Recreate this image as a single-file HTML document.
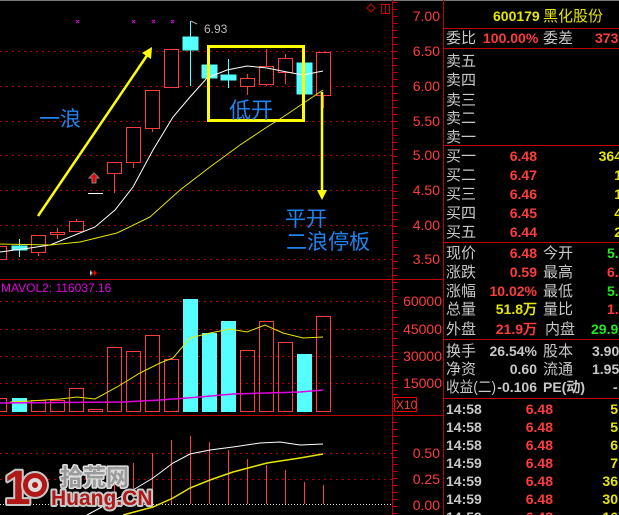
<!DOCTYPE html>
<html><head><meta charset="utf-8"><style>
html,body{margin:0;padding:0;background:#000;width:619px;height:515px;overflow:hidden}
svg{display:block}
text{font-family:"Liberation Sans","WenQuanYi Zen Hei",sans-serif}
.cn{font-family:"WenQuanYi Zen Hei","Noto Sans CJK SC",sans-serif}
.g{fill:#c8c8c8}.r{fill:#ff3c3c}.y{fill:#e6e600}.gr{fill:#22e622}
.b{font-weight:bold}
</style></head><body>
<svg width="619" height="515" viewBox="0 0 619 515" xmlns="http://www.w3.org/2000/svg">
<rect width="619" height="515" fill="#000"/>
<line x1="0" y1="0.5" x2="619" y2="0.5" stroke="#777"/>
<g stroke="#b00000" stroke-dasharray="2 4" stroke-width="1">
<line x1="0" y1="51.5" x2="392" y2="51.5"/><line x1="0" y1="86.5" x2="392" y2="86.5"/>
<line x1="0" y1="121.5" x2="392" y2="121.5"/><line x1="0" y1="155.5" x2="392" y2="155.5"/>
<line x1="0" y1="190.5" x2="392" y2="190.5"/><line x1="0" y1="225.5" x2="392" y2="225.5"/>
<line x1="0" y1="259.5" x2="392" y2="259.5"/>
<line x1="0" y1="301.5" x2="392" y2="301.5"/><line x1="0" y1="329.5" x2="392" y2="329.5"/>
<line x1="0" y1="356.5" x2="392" y2="356.5"/><line x1="0" y1="383.5" x2="392" y2="383.5"/>
<line x1="0" y1="453.5" x2="392" y2="453.5"/><line x1="0" y1="479.5" x2="392" y2="479.5"/>
</g>
<line x1="0" y1="504.5" x2="392" y2="504.5" stroke="#ddd" stroke-dasharray="1 2"/>
<g stroke="#c00000" stroke-width="1">
<line x1="392.5" y1="0" x2="392.5" y2="515"/>
<line x1="443.5" y1="0" x2="443.5" y2="515"/>
<line x1="0" y1="279.5" x2="443" y2="279.5"/>
<line x1="0" y1="415.5" x2="443" y2="415.5"/>
<line x1="443" y1="28.5" x2="619" y2="28.5"/>
<line x1="443" y1="48.5" x2="619" y2="48.5"/>
<line x1="443" y1="145.5" x2="619" y2="145.5"/>
<line x1="443" y1="242.5" x2="619" y2="242.5"/>
<line x1="443" y1="339.5" x2="619" y2="339.5"/>
<line x1="443" y1="398.5" x2="619" y2="398.5"/>
</g>
<line x1="395" y1="2" x2="395" y2="515" stroke="#c00000" stroke-width="5" stroke-dasharray="1 6"/>
<g class="r" font-size="14" text-anchor="end">
<text x="440" y="21">7.00</text><text x="440" y="56">6.50</text><text x="440" y="91">6.00</text>
<text x="440" y="126">5.50</text><text x="440" y="160">5.00</text><text x="440" y="195">4.50</text>
<text x="440" y="230">4.00</text><text x="440" y="264">3.50</text>
<text x="442" y="306">60000</text><text x="442" y="334">45000</text><text x="442" y="361">30000</text><text x="442" y="388">15000</text>
<text x="440" y="458">0.50</text><text x="440" y="484">0.25</text><text x="440" y="510">0.00</text>
</g>
<rect x="394.5" y="397.5" width="22" height="14" fill="#000" stroke="#e00"/>
<text x="396" y="409" font-size="12" class="r">X10</text>
<path d="M371 4 L375 8 L371 12 L367 8Z" fill="none" stroke="#c00"/>
<rect x="381.5" y="4.5" width="8" height="9" fill="none" stroke="#c00"/><line x1="385.5" y1="4" x2="385.5" y2="14" stroke="#c00"/>
<g stroke="#e000e0"><path d="M76 20l3 3M79 20l-3 3M132 20l3 3M135 20l-3 3M152 20l3 3M155 20l-3 3M171 20l3 3M174 20l-3 3"/></g>
<path d="M191 21 L197 24" stroke="#aaa"/><text x="204" y="33" font-size="12" fill="#bbb">6.93</text>
<g stroke="#ff3c3c" fill="none" stroke-width="1">
<rect x="-1.5" y="246.5" width="8" height="13"/>
<line x1="38.5" y1="252" x2="38.5" y2="256"/><rect x="31.5" y="235.5" width="14" height="17" fill="#000"/>
<line x1="57.5" y1="228" x2="57.5" y2="239"/><rect x="50.5" y="232.5" width="14" height="2" fill="#000"/>
<line x1="76.5" y1="219" x2="76.5" y2="231"/><rect x="69.5" y="221.5" width="14" height="10" fill="#000"/>
<line x1="114.5" y1="173" x2="114.5" y2="193"/><rect x="107.5" y="162.5" width="14" height="11" fill="#000"/>
<line x1="133.5" y1="162" x2="133.5" y2="168"/><rect x="126.5" y="127.5" width="14" height="35" fill="#000"/>
<line x1="152.5" y1="128" x2="152.5" y2="132"/><rect x="145.5" y="90.5" width="14" height="38" fill="#000"/>
<rect x="164.5" y="49.5" width="14" height="38" fill="#000"/>
<line x1="247.5" y1="74" x2="247.5" y2="95"/><rect x="240.5" y="78.5" width="14" height="8" fill="#000"/>
<line x1="266.5" y1="49" x2="266.5" y2="86"/><rect x="259.5" y="66.5" width="14" height="18" fill="#000"/>
<line x1="285.5" y1="54" x2="285.5" y2="84"/><rect x="278.5" y="58.5" width="14" height="14" fill="#000"/>
<line x1="323.5" y1="95" x2="323.5" y2="108"/><rect x="316.5" y="52.5" width="14" height="43" fill="#000"/>
</g>
<g stroke="#55ffff" fill="#55ffff">
<line x1="19.5" y1="239" x2="19.5" y2="257"/><rect x="12" y="246" width="15" height="4"/>
<line x1="190.5" y1="21" x2="190.5" y2="86"/><rect x="183" y="37" width="15" height="13"/>
<line x1="209.5" y1="62" x2="209.5" y2="80"/><rect x="202" y="65" width="15" height="13"/>
<line x1="228.5" y1="59" x2="228.5" y2="88"/><rect x="221" y="75" width="15" height="5"/>
<line x1="304.5" y1="54" x2="304.5" y2="100"/><rect x="297" y="63" width="15" height="31"/>
</g>
<line x1="88" y1="193.5" x2="103" y2="193.5" stroke="#fff"/>
<path d="M94 173 L99 178 L96 178 L96 183 L92 183 L92 178 L89 178Z" fill="#e00" stroke="#888"/>
<polyline fill="none" stroke="#fff" stroke-width="1" points="0,252 30,248 50,245 95,227 115,210 133,187 153,150 173,117 190,97 207,78 227,70 247,66 267,68 287,72 303,75 323,71"/>
<polyline fill="none" stroke="#e6e600" stroke-width="1" points="0,244 50,245 80,242 117,233 150,217 180,190 210,167 240,145 267,127 283,117 323,90"/>
<rect x="208.5" y="46.5" width="95" height="74" fill="none" stroke="#ffff00" stroke-width="3"/>
<line x1="38" y1="216" x2="148" y2="54" stroke="#ffff00" stroke-width="2.5"/>
<path d="M152 47 L151 59 L142 53Z" fill="#ffff00"/>
<line x1="322" y1="92" x2="322" y2="192" stroke="#ffff00" stroke-width="2.5"/>
<path d="M317 190 L327 190 L322 200Z" fill="#ffff00"/>
<g class="cn" fill="#1e84f0">
<text x="39" y="126" font-size="21">一浪</text>
<text x="229" y="118" font-size="22">低开</text>
<text x="285" y="226" font-size="21">平开</text>
<text x="286" y="249" font-size="21">二浪停板</text>
</g>
<path d="M91 270 L94 273 L91 276Z M94 270 L97 273 L94 276Z" fill="#e00"/><path d="M90 270 L92 273 L90 276Z" fill="#5ff"/>
<text x="1" y="292" font-size="12" fill="#e000e0">MAVOL2: 116037.16</text>
<g stroke="#ff3c3c" fill="none">
<rect x="-1.5" y="398.5" width="8" height="13"/>
<rect x="31.5" y="400.5" width="14" height="11"/><rect x="50.5" y="400.5" width="14" height="11"/>
<rect x="69.5" y="388.5" width="14" height="23"/><rect x="88.5" y="409.5" width="14" height="2"/>
<rect x="107.5" y="347.5" width="14" height="64"/><rect x="126.5" y="351.5" width="14" height="60"/>
<rect x="145.5" y="335.5" width="14" height="76"/><rect x="164.5" y="359.5" width="14" height="52"/>
<rect x="240.5" y="350.5" width="14" height="61"/><rect x="259.5" y="321.5" width="14" height="90"/>
<rect x="278.5" y="342.5" width="14" height="69"/><rect x="316.5" y="316.5" width="14" height="95"/>
</g>
<g fill="#55ffff">
<rect x="12" y="398" width="15" height="14"/><rect x="183" y="299" width="15" height="113"/>
<rect x="202" y="333" width="15" height="79"/><rect x="221" y="321" width="15" height="91"/>
<rect x="297" y="354" width="15" height="58"/>
</g>
<polyline fill="none" stroke="#e6e600" points="10,402 30,401 60,399 77,397 95,399 117,387 140,373 160,363 173,358 190,338 210,333 230,329 247,332 265,325 283,333 303,338 323,337"/>
<polyline fill="none" stroke="#e000e0" stroke-width="1.5" points="0,403 123,402 160,400 200,397 233,394 267,393 300,392 323,390"/>
<g stroke="#ff3c3c">
<line x1="152.5" y1="453" x2="152.5" y2="504"/><line x1="171.5" y1="440" x2="171.5" y2="504"/>
<line x1="190.5" y1="436" x2="190.5" y2="504"/><line x1="209.5" y1="442" x2="209.5" y2="504"/>
<line x1="228.5" y1="450" x2="228.5" y2="504"/><line x1="247.5" y1="459" x2="247.5" y2="504"/>
<line x1="266.5" y1="465" x2="266.5" y2="504"/><line x1="285.5" y1="470" x2="285.5" y2="504"/>
<line x1="304.5" y1="482" x2="304.5" y2="504"/><line x1="323.5" y1="485" x2="323.5" y2="504"/>
<line x1="133.5" y1="463" x2="133.5" y2="504"/><line x1="114.5" y1="472" x2="114.5" y2="504"/>
</g>
<polyline fill="none" stroke="#fff" points="87,515 100,508 133,490 153,478 173,463 190,454 210,450 233,447 260,443 280,442 300,445 323,444"/>
<polyline fill="none" stroke="#e6e600" stroke-width="1.5" points="123,515 153,507 173,498 190,488 210,480 233,472 267,463 300,458 323,454"/>
<g font-weight="bold" paint-order="stroke" stroke="#c8c8c8" stroke-width="4" stroke-linejoin="round">
<text x="4" y="504" font-size="48" fill="#b01818" letter-spacing="-4">1</text>
<text x="60" y="485" font-size="23" fill="#9a9a9a" class="cn" stroke="#ddd" stroke-width="3">拾荒网</text>
<text x="51" y="505" font-size="21" fill="#b01818">Huang.CN</text>
</g>
<circle cx="35" cy="485" r="13" fill="#b01818" stroke="#c8c8c8" stroke-width="2"/>
<circle cx="35" cy="485" r="7" fill="#ddd"/>
<circle cx="35" cy="485" r="3" fill="#b01818"/>
<g font-size="14">
<text x="493" y="21" class="y b">600179</text><text x="543" y="21" class="y cn" font-size="15">黑化股份</text>
<text x="446" y="43" class="g cn" font-size="15">委比</text><text x="483" y="43" class="r b">100.00%</text><text x="543" y="43" class="g cn" font-size="15">委差</text><text x="595" y="43" class="r b">373</text>
<g class="g cn" font-size="15">
<text x="446" y="66">卖五</text><text x="446" y="85">卖四</text><text x="446" y="105">卖三</text><text x="446" y="123">卖二</text><text x="446" y="142">卖一</text>
<text x="446" y="161">买一</text><text x="446" y="180">买二</text><text x="446" y="199">买三</text><text x="446" y="218">买四</text><text x="446" y="237">买五</text>
<text x="446" y="258">现价</text><text x="446" y="277">涨跌</text><text x="446" y="296">涨幅</text><text x="446" y="314">总量</text><text x="446" y="334">外盘</text>
<text x="543" y="258">今开</text><text x="543" y="277">最高</text><text x="543" y="296">最低</text><text x="543" y="314">量比</text><text x="545" y="334">内盘</text>
<text x="446" y="356">换手</text><text x="446" y="374">净资</text><text x="446" y="392" textLength="50" lengthAdjust="spacingAndGlyphs">收益(二)</text>
<text x="543" y="356">股本</text><text x="543" y="374">流通</text>
</g>
<g class="r b" text-anchor="end">
<text x="537" y="161">6.48</text><text x="537" y="180">6.47</text><text x="537" y="199">6.46</text><text x="537" y="218">6.45</text><text x="537" y="237">6.44</text>
<text x="537" y="258">6.48</text><text x="537" y="277">0.59</text><text x="537" y="296">10.02%</text><text x="537" y="334">21.9万</text>
</g>
<text x="537" y="314" class="y b" text-anchor="end">51.8万</text>
<g class="y b" text-anchor="end">
<text x="622" y="161">364</text><text x="622" y="180">1</text><text x="622" y="199">1</text><text x="622" y="218">4</text><text x="622" y="237">2</text>
</g>
<text x="607" y="258" class="gr b">5.89</text><text x="607" y="277" class="r b">6.48</text><text x="607" y="296" class="gr b">5.86</text><text x="607" y="314" class="r b">1.5</text><text x="591" y="334" class="gr b">29.9万</text>
<g class="g b" text-anchor="end">
<text x="537" y="356">26.54%</text><text x="537" y="374">0.60</text><text x="537" y="392">-0.106</text>
</g>
<text x="592" y="356" class="g b">3.90亿</text><text x="592" y="374" class="g b">1.95亿</text>
<text x="543" y="392" class="g b">PE(动)</text><text x="613" y="392" class="g b">-</text>
<g class="g b">
<text x="446" y="414">14:58</text><text x="446" y="432">14:58</text><text x="446" y="450">14:58</text><text x="446" y="468">14:59</text><text x="446" y="486">14:59</text><text x="446" y="504">14:59</text><text x="446" y="522">14:59</text>
</g>
<g class="r b" text-anchor="end">
<text x="553" y="414">6.48</text><text x="553" y="432">6.48</text><text x="553" y="450">6.48</text><text x="553" y="468">6.48</text><text x="553" y="486">6.48</text><text x="553" y="504">6.48</text><text x="553" y="522">6.48</text>
</g>
<g class="y b" text-anchor="end">
<text x="618" y="414">5</text><text x="618" y="432">5</text><text x="618" y="450">6</text><text x="618" y="468">7</text><text x="618" y="486">36</text><text x="618" y="504">30</text><text x="618" y="522">16</text>
</g>
</g>
</svg>
</body></html>
